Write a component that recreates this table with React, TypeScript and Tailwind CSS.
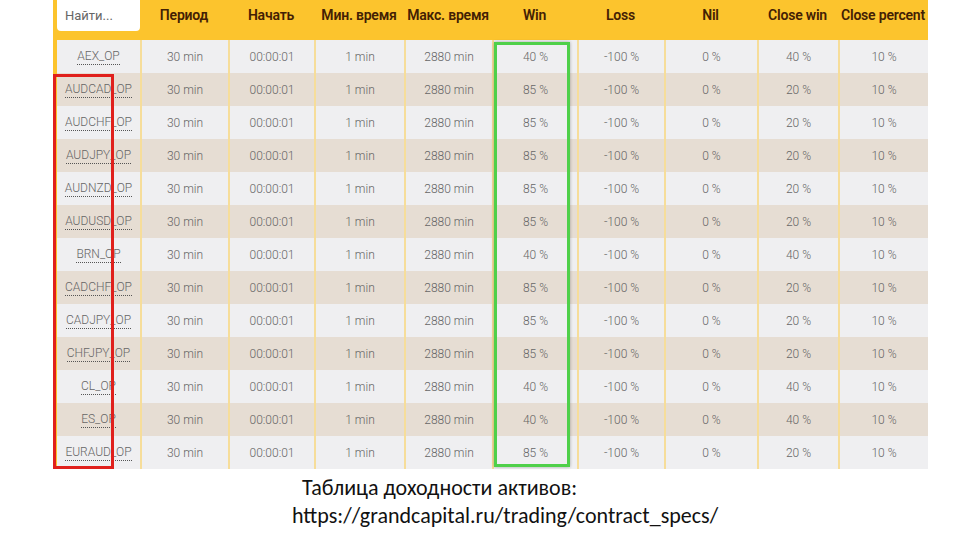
import React from "react"

const COLS = [83, 88, 86, 90, 88, 85, 87, 93, 81, 90]
const HEAD = ["Период", "Начать", "Мин. время", "Макс. время", "Win", "Loss", "Nil", "Close win", "Close percent"]

type Row = [string, string, string, string, string]

// name, win, loss, nil, close win (close percent is always 10 %)
const ROWS: Row[] = [
  ["AEX_OP", "40 %", "-100 %", "0 %", "40 %"],
  ["AUDCAD_OP", "85 %", "-100 %", "0 %", "20 %"],
  ["AUDCHF_OP", "85 %", "-100 %", "0 %", "20 %"],
  ["AUDJPY_OP", "85 %", "-100 %", "0 %", "20 %"],
  ["AUDNZD_OP", "85 %", "-100 %", "0 %", "20 %"],
  ["AUDUSD_OP", "85 %", "-100 %", "0 %", "20 %"],
  ["BRN_OP", "40 %", "-100 %", "0 %", "40 %"],
  ["CADCHF_OP", "85 %", "-100 %", "0 %", "20 %"],
  ["CADJPY_OP", "85 %", "-100 %", "0 %", "20 %"],
  ["CHFJPY_OP", "85 %", "-100 %", "0 %", "20 %"],
  ["CL_OP", "40 %", "-100 %", "0 %", "40 %"],
  ["ES_OP", "40 %", "-100 %", "0 %", "40 %"],
  ["EURAUD_OP", "85 %", "-100 %", "0 %", "20 %"],
]

export default function App() {
  return (
    <div className="relative w-[960px] h-[540px] bg-white overflow-hidden" style={{ fontFamily: "Roboto, 'Liberation Sans', sans-serif" }}>
      <div className="ml-[53px] w-[875px] border-l-4 border-[#fcc42d]">
        {/* Header */}
        <div className="flex h-[40px] bg-[#fcc42d] text-yellow-950">
          <div className="w-[83px] h-[31px] bg-white rounded-b-[4px] flex items-center pl-[8px] text-[13px] text-[#666]">
            Найти...
          </div>
          {HEAD.map((h, i) => (
            <div
              key={h}
              style={{ width: COLS[i + 1] }}
              className="flex items-center justify-center pb-[9px] text-[14px] font-semibold text-yellow-950 whitespace-nowrap tracking-[-0.2px]"
            >
              {h}
            </div>
          ))}
        </div>

        {/* Rows */}
        {ROWS.map(([name, win, loss, nil, cwin], r) => {
          const cells = [name, "30 min", "00:00:01", "1 min", "2880 min", win, loss, nil, cwin, "10 %"]
          return (
            <div key={name} className={`flex h-[33px] ${r % 2 === 0 ? "bg-[#efeff1]" : "bg-[#e6ddd3]"}`}>
              {cells.map((c, i) => (
                <div
                  key={i}
                  style={{ width: COLS[i] }}
                  className={`flex items-center justify-center text-[12px] font-light text-[#666] whitespace-nowrap ${
                    i > 0 ? "border-l-2 border-[#f6dd9a]" : ""
                  }`}
                >
                  {i === 0 ? (
                    <span className="border-b border-dotted border-[#555] leading-[15px]">{c}</span>
                  ) : (
                    c
                  )}
                </div>
              ))}
            </div>
          )
        })}
      </div>

      {/* Highlight boxes */}
      <div className="absolute left-[53px] top-[74px] w-[61px] h-[395px] border-[3px] border-[#e0201c]" />
      <div className="absolute left-[494px] top-[42px] w-[76px] h-[425px] border-[3px] border-[#4fd04a] shadow-[0_0_3px_rgba(0,0,0,0.3)]" />

      {/* Caption */}
      <div className="pl-[292px] pt-[5px] text-[22px] leading-[28px] text-[#111]" style={{ fontFamily: "Carlito, Lato, 'Open Sans', sans-serif" }}>
        <div className="pl-[10px]">Таблица доходности активов:</div>
        <div>https://grandcapital.ru/trading/contract_specs/</div>
      </div>
    </div>
  )
}
